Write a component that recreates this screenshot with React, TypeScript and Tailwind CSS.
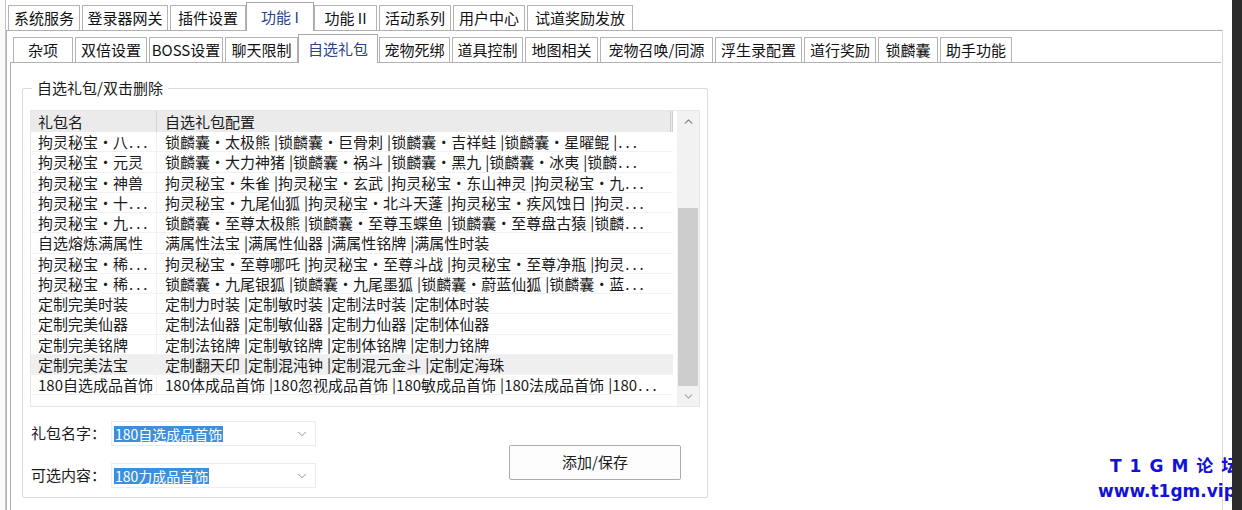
import React from "react";
import { ChevronDown, ChevronUp } from "lucide-react";

const topTabs = [
  { label: "系统服务", cls: "w-[72px]" },
  { label: "登录器网关", cls: "ml-[2px] w-[86px]" },
  { label: "插件设置", cls: "ml-[2px] w-[76px]" },
  { label: "功能 I", cls: "w-[68px]", active: true },
  { label: "功能 II", cls: "w-[63px]" },
  { label: "活动系列", cls: "ml-[2px] w-[72px]" },
  { label: "用户中心", cls: "ml-[2px] w-[72px]" },
  { label: "试道奖励发放", cls: "ml-[2px] w-[106px]" },
];

const subTabs = [
  { label: "杂项", cls: "w-[60px]" },
  { label: "双倍设置", cls: "ml-[2px] w-[72px]" },
  { label: "BOSS设置", cls: "ml-[2px] w-[74px]" },
  { label: "聊天限制", cls: "ml-[2px] w-[73px]" },
  { label: "自选礼包", cls: "w-[80px]", active: true },
  { label: "宠物死绑", cls: "ml-[1px] w-[71px]" },
  { label: "道具控制", cls: "ml-[2px] w-[71px]" },
  { label: "地图相关", cls: "ml-[2px] w-[73px]" },
  { label: "宠物召唤/同源", cls: "ml-[2px] w-[113px]" },
  { label: "浮生录配置", cls: "ml-[2px] w-[87px]" },
  { label: "道行奖励", cls: "ml-[2px] w-[72px]" },
  { label: "锁麟囊", cls: "ml-[2px] w-[60px]" },
  { label: "助手功能", cls: "ml-[2px] w-[72px]" },
];

const rows = [
  ["拘灵秘宝・八...", "锁麟囊・太极熊|锁麟囊・巨骨刺|锁麟囊・吉祥蛙|锁麟囊・星曜鲲|..."],
  ["拘灵秘宝・元灵", "锁麟囊・大力神猪|锁麟囊・祸斗|锁麟囊・黑九|锁麟囊・冰夷|锁麟..."],
  ["拘灵秘宝・神兽", "拘灵秘宝・朱雀|拘灵秘宝・玄武|拘灵秘宝・东山神灵|拘灵秘宝・九..."],
  ["拘灵秘宝・十...", "拘灵秘宝・九尾仙狐|拘灵秘宝・北斗天蓬|拘灵秘宝・疾风蚀日|拘灵..."],
  ["拘灵秘宝・九...", "锁麟囊・至尊太极熊|锁麟囊・至尊玉蝶鱼|锁麟囊・至尊盘古猿|锁麟..."],
  ["自选熔炼满属性", "满属性法宝|满属性仙器|满属性铭牌|满属性时装"],
  ["拘灵秘宝・稀...", "拘灵秘宝・至尊哪吒|拘灵秘宝・至尊斗战|拘灵秘宝・至尊净瓶|拘灵..."],
  ["拘灵秘宝・稀...", "锁麟囊・九尾银狐|锁麟囊・九尾墨狐|锁麟囊・蔚蓝仙狐|锁麟囊・蓝..."],
  ["定制完美时装", "定制力时装|定制敏时装|定制法时装|定制体时装"],
  ["定制完美仙器", "定制法仙器|定制敏仙器|定制力仙器|定制体仙器"],
  ["定制完美铭牌", "定制法铭牌|定制敏铭牌|定制体铭牌|定制力铭牌"],
  ["定制完美法宝", "定制翻天印|定制混沌钟|定制混元金斗|定制定海珠"],
  ["180自选成品首饰", "180体成品首饰|180忽视成品首饰|180敏成品首饰|180法成品首饰|180..."],
];

// listview text: bar gets a gap before it, trailing dots are spread out
function Cell({ text }: { text: string }) {
  const dots = text.endsWith("...");
  const body = dots ? text.slice(0, -3) : text;
  const parts = body.split("|");
  return (
    <>
      {parts.map((p, i) => (
        <React.Fragment key={i}>
          {i > 0 && <span className="pl-[4px]">|</span>}
          {p}
        </React.Fragment>
      ))}
      {dots && <span className="tracking-[3px] pl-[1px]">...</span>}
    </>
  );
}

function Tab({ label, cls, active }: { label: string; cls: string; active?: boolean }) {
  return (
    <div
      className={
        active
          ? `${cls} h-[29px] -mb-px relative z-10 flex items-center justify-center border border-b-0 border-[#a9a9a9] bg-white text-[#2a3f8f]`
          : `${cls} h-[25px] flex items-center justify-center border border-b-0 border-[#b4b4b4] bg-white text-[#111]`
      }
    >
      {label}
    </div>
  );
}

function Combo({ value }: { value: string }) {
  return (
    <div className="w-[205px] h-[25px] flex items-center border border-[#ececec] bg-white pl-[2px] pr-[6px]">
      <span className="bg-[#3d8fdc] text-white text-[14px] leading-[16px] px-[1px]">{value}</span>
      <ChevronDown className="ml-auto text-[#8a8a8a]" size={14} strokeWidth={1.6} />
    </div>
  );
}

export default function App() {
  return (
    <div className="relative w-[1242px] h-[510px] overflow-hidden bg-white flex font-['Noto_Sans_CJK_SC','Liberation_Sans',sans-serif] text-[15px] text-[#1a1a1a]">
      {/* sliver of the window behind */}
      <div className="w-[6px] shrink-0 border-r border-[#c4c4c4] bg-[#fafafa]" />

      <div className="w-[1217px] shrink-0 flex flex-col">
        {/* top tabs */}
        <div className="h-[30px] flex items-end pl-[2px]">
          {topTabs.map((t) => (
            <Tab key={t.label} {...t} />
          ))}
        </div>

        <div className="flex-1 border-t border-l border-r border-[#b0b0b0] border-r-[#dadada] flex flex-col">
          {/* second-level tabs */}
          <div className="h-[31px] flex items-end pl-[6px]">
            {subTabs.map((t) => (
              <Tab key={t.label} {...t} />
            ))}
          </div>

          <div className="flex-1 ml-[3px] mr-[1px] border-t border-l border-[#b0b0b0] pl-[11px] pt-[15px]">
            <fieldset className="w-[686px] h-[420px] border border-[#dcdcdc] rounded-[2px] px-[7px]">
              <legend className="ml-[2px] px-[5px] leading-[20px]">自选礼包/双击删除</legend>

              {/* list */}
              <div className="mt-[12px] h-[297px] flex border border-[#e6e6e6]">
                <div className="w-[645px] flex flex-col">
                  <div className="h-[21px] flex bg-[#ebebeb] leading-[21px] mr-[3px]">
                    <div className="w-[126px] pl-[7px] border-r border-[#d2d2d2]">礼包名</div>
                    <div className="flex-1 pl-[8px] border-r-[3px] border-double border-[#cfcfcf]">自选礼包配置</div>
                  </div>
                  {rows.map(([name, conf], i) => (
                    <div
                      key={i}
                      className={`h-[20.25px] flex leading-[20px] border-b border-[#f1f1f1] mr-[3px] ${
                        i === 11 ? "bg-[#efefef]" : ""
                      }`}
                    >
                      <div className="w-[126px] pl-[7px] whitespace-nowrap overflow-hidden border-r border-[#f1f1f1]">
                        <Cell text={name} />
                      </div>
                      <div className="flex-1 pl-[8px] whitespace-nowrap overflow-hidden">
                        <Cell text={conf} />
                      </div>
                    </div>
                  ))}
                </div>
                {/* scrollbar */}
                <div className="w-[22px] ml-auto bg-[#f2f2f2] flex flex-col items-center">
                  <div className="h-[20px] flex items-center">
                    <ChevronUp size={13} strokeWidth={2.4} className="text-[#858585]" />
                  </div>
                  <div className="mt-[77px] w-[20px] h-[178px] bg-[#cdcdcd]" />
                  <div className="flex-1 flex items-center">
                    <ChevronDown size={13} strokeWidth={2} className="text-[#a8a8a8]" />
                  </div>
                </div>
              </div>

              {/* form */}
              <div className="flex">
                <div className="flex flex-col gap-[17px] mt-[14px] pl-[1px]">
                  <div className="flex items-center">
                    <span className="w-[80px]">礼包名字：</span>
                    <Combo value="180自选成品首饰" />
                  </div>
                  <div className="flex items-center">
                    <span className="w-[80px]">可选内容：</span>
                    <Combo value="180力成品首饰" />
                  </div>
                </div>
                <button className="ml-[193px] mt-[38px] w-[172px] h-[35px] border border-[#adadad] rounded-[2px] bg-[#fdfdfd] text-[15px]">
                  添加/保存
                </button>
              </div>
            </fieldset>
          </div>
        </div>
      </div>

      {/* watermark */}
      <div className="absolute left-[1098px] top-[454px] z-10 flex flex-col items-start font-['DejaVu_Sans','Noto_Sans_CJK_SC',sans-serif] font-bold text-[#1212d6]">
        <span className="ml-[12px] text-[17px] tracking-[8px] leading-[24px] whitespace-nowrap">T1GM论坛</span>
        <span className="text-[17px] leading-[22px] mt-[2px] whitespace-nowrap">www.t1gm.vip</span>
      </div>

      {/* edge of the neighbouring dark window */}
      <div className="absolute right-0 top-0 z-20 w-[10px] h-full bg-[#2b2b2b]" />
    </div>
  );
}
